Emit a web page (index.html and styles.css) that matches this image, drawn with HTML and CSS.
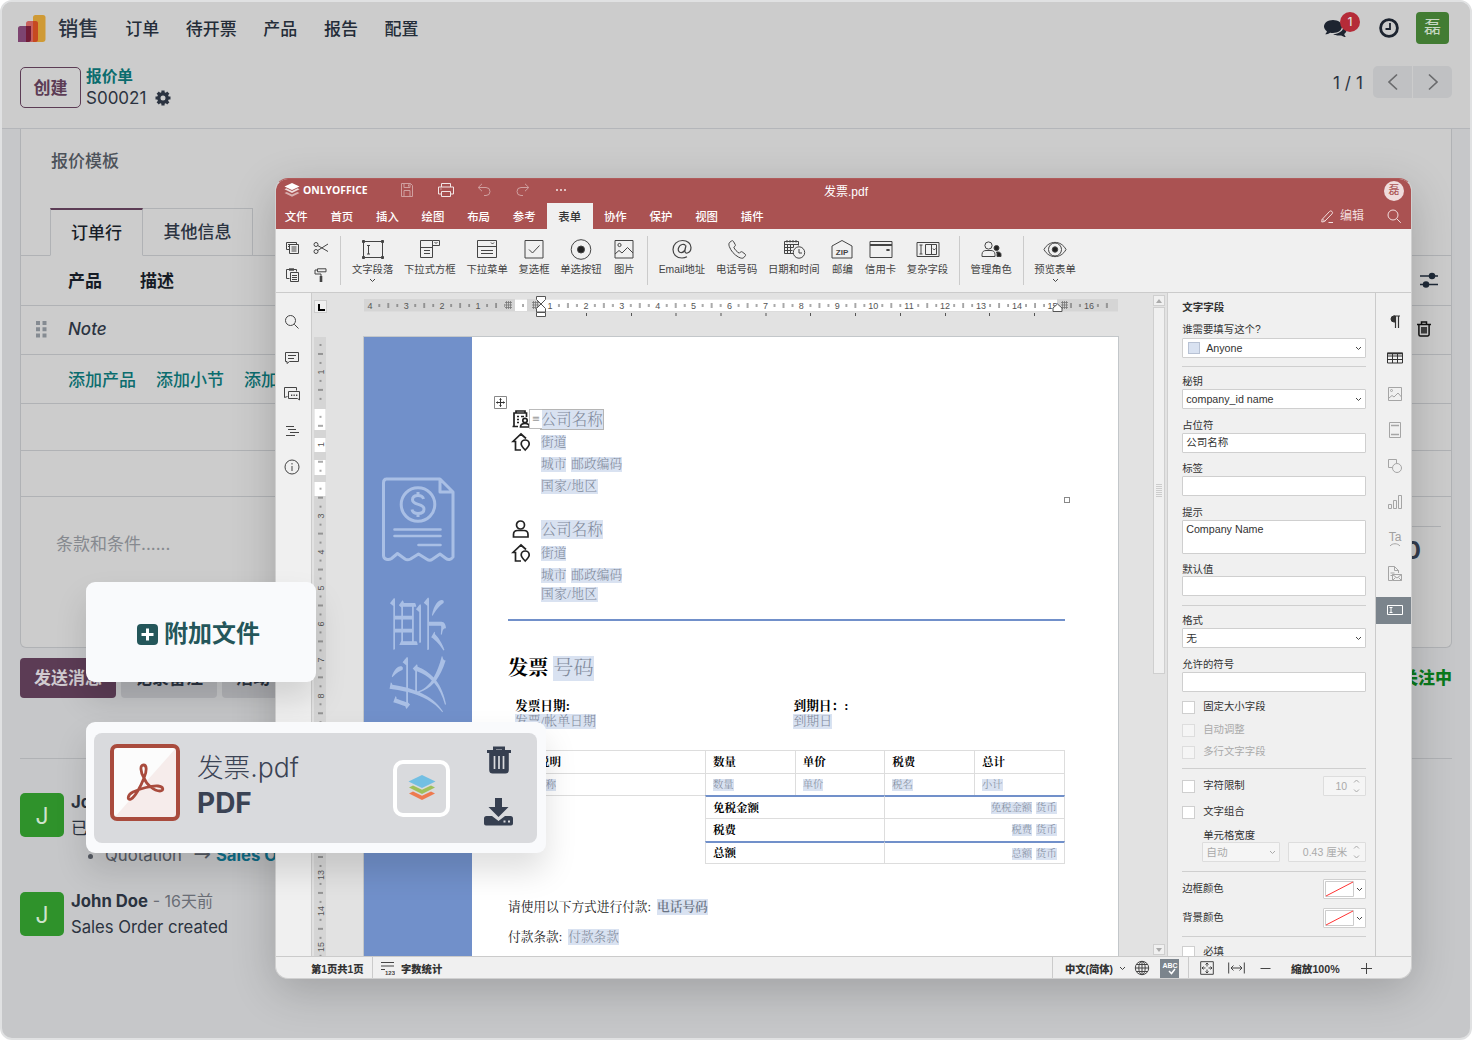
FILE: index.html
```html
<!DOCTYPE html>
<html lang="zh-CN">
<head>
<meta charset="utf-8">
<title>销售 - S00021</title>
<link rel="stylesheet" href="styles.css">
</head>
<body>
<div class="app">
  <header class="app-head">
    <nav class="nav">
      <svg class="nav-logo" width="28" height="28" viewBox="0 0 28 28"><path d="M15 2.5A2.500 2.500 0 0 1 17.500 0H25a2.500 2.500 0 0 1 2.500 2.500V24a3 3 0 0 1-3 3H15z" fill="#cf9a35"/><path d="M8 8.500A2.500 2.500 0 0 1 10.500 6H17.500A2.500 2.500 0 0 1 20 8.500V24a3 3 0 0 1-3 3H8z" fill="#c8605c"/><path d="M15 6h2.500A2.500 2.500 0 0 1 20 8.500V24a3 3 0 0 1-3 3h-2z" fill="#c74a20"/><path d="M0 13.500A2.500 2.500 0 0 1 2.500 11H13V24a3 3 0 0 1-3 3H0z" fill="#7d4470"/><path d="M8 11h5v13a3 3 0 0 1-3 3H8z" fill="#731c37"/></svg>
      <span class="nav-title">销售</span>
      <span class="nav-item">订单</span><span class="nav-item">待开票</span><span class="nav-item">产品</span><span class="nav-item">报告</span><span class="nav-item">配置</span>
      <div class="nav-right">
        <span class="chat"><svg width="24" height="19" viewBox="0 0 24 19"><path d="M9 1c5 0 9 2.800 9 6.500S14 14 9 14c-1 0-2-.1-2.900-.3C4.600 14.700 3 15.300 1.200 15.300c1-1 1.600-2 1.700-3.100C1.100 11 0 9.400 0 7.500 0 3.800 4 1 9 1z" fill="#1d2430"/><path d="M19.500 6.500c2 1.200 3 2.700 3 4.500 0 1.600-.9 3-2.300 4 .2 1.100.8 2 1.600 2.900-1.800 0-3.300-.6-4.600-1.500-3 .5-6.200 0-8-1.300 5.500 0 10.600-3.100 10.300-8.600z" fill="#1d2430"/></svg><b class="badge">1</b></span>
        <svg width="20" height="20" viewBox="0 0 20 20" fill="none" stroke="#1d2430"><circle cx="10" cy="10" r="8.400" stroke-width="2.800"/><path d="M11 5v6H6.500" stroke-width="1.800"/></svg>
        <span class="me">磊</span>
      </div>
    </nav>
    <div class="control">
      <button class="create">创建</button>
      <div class="crumbs"><b>报价单</b><span>S00021 <svg width="16" height="16" viewBox="0 0 16 16"><circle cx="8" cy="8" r="4.200" fill="none" stroke="#2b3340" stroke-width="3.400"/><path d="M8 .5v3M8 12.500v3M.5 8h3M12.500 8h3M2.700 2.700l2 2M11.300 11.300l2 2M2.700 13.300l2-2M11.300 4.700l2-2" stroke="#2b3340" stroke-width="3.200"/></svg></span></div>
      <div class="pager"><span>1 / 1</span><i><svg width="12" height="18" viewBox="0 0 12 18"><path d="M10 1.500L2 9l8 7.500"/></svg></i><i><svg width="12" height="18" viewBox="0 0 12 18"><path d="M2 1.500L10 9l-8 7.500"/></svg></i></div>
    </div>
  </header>
  <main class="sheet">
    <div class="tmpl">报价模板</div>
    <div class="tabs"><span class="tab on">订单行</span><span class="tab">其他信息</span></div>
    <div class="line thead"><span>产品</span><span>描述</span>
      <svg class="line-end" width="18" height="16" viewBox="0 0 18 16" stroke="#1f2a38" stroke-width="1.700"><path d="M0 4h18M0 12.500h18"/><circle cx="12" cy="4" r="2.400" fill="#1f2a38"/><circle cx="6" cy="12.500" r="2.400" fill="#1f2a38"/></svg></div>
    <div class="line note"><svg width="11" height="17" viewBox="0 0 11 17" fill="#858b92"><path d="M0 0h4v4H0zM6.500 0h4v4h-4zM0 6.300h4v4H0zM6.500 6.300h4v4h-4zM0 12.600h4v4H0zM6.500 12.600h4v4h-4z"/></svg><em>Note</em>
      <svg class="line-end bin" width="14" height="16" viewBox="0 0 14 16" fill="none" stroke="#111" stroke-width="1.500"><path d="M0 3.500h14M4.500 3V1h5v2M1.900 3.500V13.500a1.500 1.500 0 0 0 1.500 1.500h7.200a1.500 1.500 0 0 0 1.500-1.500V3.500M5 6v6.500M7 6v6.500M9 6v6.500"/></svg></div>
    <div class="line add"><span>添加产品</span><span>添加小节</span><span>添加备注</span></div>
    <div class="line blank"></div>
    <div class="line blank last"></div>
    <div class="terms"><span>条款和条件......</span><b>0</b></div>
  </main>
  <section class="chatter">
    <div class="actions"><span class="send">发送消息</span><span>记录备注</span><span>活动</span><b>关注中</b></div>
    <div class="rule"></div>
    <article class="msg"><span class="avatar">J</span><div><p><b>John Doe</b> <small>- 16天前</small></p><p class="dark">已创建销售订单</p><ul><li>Quotation <i>→</i> <b>Sales Order</b></li></ul></div></article>
    <article class="msg"><span class="avatar">J</span><div><p><b>John Doe</b> <small>- 16天前</small></p><p>Sales Order created</p></div></article>
  </section>
</div>

<div class="win">
  <div class="win-top">
    <div class="brand"><svg width="16" height="15" viewBox="0 0 16 15"><path d="M8 0l7.500 3.500L8 7 .5 3.500z" fill="#fff"/><path d="M.5 6.300l2-1L8 8l5.500-2.700 2 1L8 10z" fill="#fff" opacity=".8"/><path d="M.5 10l2.200-1.100L8 11.500l5.300-2.600 2.200 1.100L8 13.800z" fill="#fff" opacity=".55"/></svg>ONLYOFFICE</div>
    <div class="quick">
      <svg class="dim" width="16" height="14" viewBox="0 0 16 14"><path d="M2.500.5h9l2 2v11h-11zM5 .5v4h6v-4M5 13.500v-6h6v6M9.500 1.500v2"/></svg>
      <svg width="16" height="14" viewBox="0 0 16 14"><path d="M3.500 4V.5h9V4M3.500 11h-3V4h15v7h-3M3.500 8.500h9v5h-9zM2.500 6h1"/></svg>
      <svg class="dim" width="16" height="14" viewBox="0 0 16 14"><path d="M6 .8L2.200 4.500 6 8.200M2.500 4.500h7.500a4 4 0 0 1 0 8H8"/></svg>
      <svg class="dim" width="16" height="14" viewBox="0 0 16 14"><path d="M10 .8l3.800 3.700L10 8.200M13.500 4.500H6a4 4 0 0 0 0 8h2"/></svg>
      <svg width="16" height="14" viewBox="0 0 16 14"><path d="M3 7h2M7 7h2M11 7h2" stroke-width="1.600"/></svg>
    </div>
    <span class="doc-name">发票.pdf</span>
    <span class="user">磊</span>
  </div>
  <div class="win-tabs">
    <span>文件</span><span>首页</span><span>插入</span><span>绘图</span><span>布局</span><span>参考</span><span class="cur">表单</span><span>协作</span><span>保护</span><span>视图</span><span>插件</span>
    <div class="mode"><svg width="13" height="13" viewBox="0 0 13 13"><path d="M1 9.500L8.500 1.500a1.700 1.700 0 0 1 2.500 2.400L3.500 11.500.8 12zM7.500 12.500h4.500M1.500 9l2.300 2.300"/></svg>编辑<svg class="find" width="15" height="15" viewBox="0 0 15 15"><circle cx="6" cy="6" r="5"/><path d="M9.800 9.800l4 4"/></svg></div>
  </div>
  <div class="tools">
    <div class="clip">
      <svg width="16" height="14" viewBox="0 0 16 14"><path d="M4 8.500H1.500v-7h10v2M3 3.500h5M3 5.500h1M4.500 3.500h9v9h-9zM6.500 6h5M6.500 8h5M6.500 10h5"/></svg>
      <svg width="16" height="14" viewBox="0 0 16 14"><circle cx="3" cy="3.500" r="2"/><circle cx="3" cy="10.500" r="2"/><path d="M4.700 4.500L15 10.500M4.700 9.500L15 3"/></svg>
      <svg width="16" height="14" viewBox="0 0 16 14"><path d="M4.500 10.500H1.500v-9h10v2M5.500 4.500h8v9h-8zM7 7.500h5M7 9.500h5M7 11.500h5"/><path d="M4 1.500h5" stroke-width="2.400"/></svg>
      <svg width="16" height="14" viewBox="0 0 16 14"><path d="M4.500.8h8.500v3H4.500zM4.500 2h-2.500v4h6v2"/><path d="M8 8v6" stroke-width="2.600"/></svg>
    </div>
    <i class="sep"></i>
    <div class="tool"><svg width="24" height="22" viewBox="0 0 24 22"><path d="M2.500 2.500h19v16h-19zM6 6.500h3M6 15h3M7.500 6.500V15"/><path d="M1.500 1.500h2v2h-2zM20.500 1.500h2v2h-2zM1.500 17.500h2v2h-2zM20.500 17.500h2v2h-2z" fill="#444"/></svg>文字段落<svg class="more" width="7" height="5" viewBox="0 0 7 5"><path d="M1 1l2.500 2.500L6 1"/></svg></div>
    <div class="tool"><svg width="24" height="22" viewBox="0 0 24 22"><path d="M2.500 1.500h12v17h-12zM2.500 8.500h12M14.500 1.500h7v5h-7M16.500 3l1.500 1.500L19.500 3M6 11.500h6M6 14.500h6"/></svg>下拉式方框</div>
    <div class="tool"><svg width="24" height="22" viewBox="0 0 24 22"><path d="M2.500 1.500h19v17h-19zM2.500 7.500h19M16 3.500l1.500 1.500L19 3.500M6 11.500h12M6 14.500h12"/></svg>下拉菜单</div>
    <div class="tool"><svg width="24" height="22" viewBox="0 0 24 22"><path d="M3 1.500h18v17.500H3zM7 10.500l3.500 3.500L17.500 6.500"/></svg>复选框</div>
    <div class="tool"><svg width="24" height="22" viewBox="0 0 24 22"><circle cx="12" cy="10.500" r="9.800"/><circle cx="12" cy="10.500" r="3.500" fill="#222"/></svg>单选按钮</div>
    <div class="tool"><svg width="24" height="22" viewBox="0 0 24 22"><path d="M3 1.500h18v17.500H3zM3 15l4-3.500 3 2.500 5.500-5.500L21 14"/><circle cx="7.500" cy="6" r="1.600"/></svg>图片</div>
    <i class="sep"></i>
    <div class="tool"><svg width="24" height="22" viewBox="0 0 24 22"><path d="M15.500 6.500c-1-1.500-5.500-2-7 2.500-1.500 5 4.500 6.500 6.500 1.500l1-4-1 5c-.3 2 .8 3 2.300 2.500 2-.6 3.700-3 3.700-5.500 0-4-3.500-7-8.500-7-5.500 0-9.500 4-9.500 9s3.500 8.500 9 8.500c2 0 3.500-.4 5-1.200" stroke-width="1.200"/></svg>Email地址</div>
    <div class="tool"><svg width="24" height="22" viewBox="0 0 24 22"><path d="M4.500 3.500l2-1.500c1-.6 1.600-.2 2 .5l1.700 3c.4.800.2 1.400-.4 1.900l-1 .8c1 2.500 3 4.500 5.500 6l1-1c.6-.6 1.300-.7 2-.2l2.700 2c.7.600.8 1.200.3 1.800l-1.500 1.800c-1 1-2.800.8-5.300-.5C9 15.500 6 12 4.300 7.500c-.6-1.800-.5-3.200.2-4z"/></svg>电话号码</div>
    <div class="tool"><svg width="24" height="22" viewBox="0 0 24 22"><path d="M11 14.500H2.500v-12h14v4M2.500 5.500h14M5 1v2.500M8 1v2.500M11 1v2.500M14 1v2.500M2.500 8.500h9M2.500 11.500h8M5.500 5.500v9M8.500 5.500v9M11.500 5.500v3"/><circle cx="17" cy="13.500" r="5.700" fill="#f0f0f0"/><path d="M17 10v4h3"/></svg>日期和时间</div>
    <div class="tool"><svg width="24" height="22" viewBox="0 0 24 22"><path d="M2 19V7l10-5.500L22 7v12z"/><text x="12" y="15.500" class="zip">ZIP</text></svg>邮编</div>
    <div class="tool"><svg width="24" height="22" viewBox="0 0 24 22"><path d="M1 2.500h22v16H1zM1 6.500h22M17.500 11h3" /><path d="M1 6h22M17.500 11h3" stroke-width="1.800"/></svg>信用卡</div>
    <div class="tool"><svg width="24" height="22" viewBox="0 0 24 22"><path d="M1 3.500h22v14H1zM3.500 6h3M3.500 15h3M5 6v9M9.500 5.500h11v10h-11zM15.500 5.500v10M17 9.500l1.200 1.500 1.300-1.500"/></svg>复杂字段</div>
    <i class="sep"></i>
    <div class="tool"><svg width="24" height="22" viewBox="0 0 24 22"><circle cx="9.500" cy="6.500" r="3.600"/><path d="M3 17.500v-2c0-3 2-4 4-4h5c2 0 4 1 4 4v2z"/><circle cx="17.500" cy="9" r="2.500" fill="#222"/><path d="M18 17.500v-3l-.5-1.500h1.500c2 0 3 1 3 2.500v2z" fill="#222"/></svg>管理角色</div>
    <i class="sep"></i>
    <div class="tool"><svg width="24" height="22" viewBox="0 0 24 22"><path d="M1 10.500C6 1 18 1 23 10.500 18 20 6 20 1 10.500z"/><circle cx="12" cy="10.500" r="6.500"/><circle cx="12" cy="10.500" r="2.700" fill="#222"/></svg>预览表单<svg class="more" width="7" height="5" viewBox="0 0 7 5"><path d="M1 1l2.500 2.500L6 1"/></svg></div>
  </div>

  <div class="body">
    <div class="left-bar">
      <svg width="16" height="16" viewBox="0 0 16 16"><circle cx="6.500" cy="6.500" r="5"/><path d="M10.300 10.300l4.200 4.200"/></svg>
      <svg width="16" height="16" viewBox="0 0 16 16"><path d="M1.500 2.500h13v9h-9l-2.500 2v-2h-1.500zM4 5.500h8M4 8.500h6"/></svg>
      <svg width="16" height="16" viewBox="0 0 16 16"><path d="M3.500 10.500l-3 1v-10h12v3M4.500 5.500h11v8.500l-2-1.500h-9z"/><path d="M7 9.300h1.300M9.500 9.300h1.300M12 9.300h1.300" stroke-width="1.500"/></svg>
      <svg width="16" height="16" viewBox="0 0 16 16"><path d="M2 3.500h8M4 6.500h8M6 9.500h9M2 12.500h9"/></svg>
      <svg width="16" height="16" viewBox="0 0 16 16"><circle cx="8" cy="8" r="7"/><path d="M8 7v5M8 4v1.500"/></svg>
    </div>
    <div class="vruler">
      <i class="corner"></i>
      <svg class="ruler" width="14" height="620" viewBox="313 337 14 620">
        <defs><pattern id="vt" patternUnits="userSpaceOnUse" x="313" y="336" width="14" height="35.930"><path d="M6.500 9h2M5 18h5M6.500 27h2" stroke="#555" stroke-width="1"/></pattern></defs>
        <path d="M314 337h12v620h-12z" fill="#d5d5d5"/>
        <path d="M314.500 409h11v21h-11zM314.500 438h11v14h-11zM314.500 460h11v15h-11zM314.500 482h11v14h-11z" fill="#fff"/>
        <path d="M313 337h14v93h-14zM313 460h14v15h-14zM313 485h14v472h-14z" fill="url(#vt)"/>
        <g class="num"><text transform="translate(323.500 372) rotate(-90)">1</text><text transform="translate(323.500 444.500) rotate(-90)">1</text><text transform="translate(323.500 516) rotate(-90)">3</text><text transform="translate(323.500 552) rotate(-90)">4</text><text transform="translate(323.500 588) rotate(-90)">5</text><text transform="translate(323.500 624) rotate(-90)">6</text><text transform="translate(323.500 660) rotate(-90)">7</text><text transform="translate(323.500 696) rotate(-90)">8</text><text transform="translate(323.500 875) rotate(-90)">13</text><text transform="translate(323.500 911) rotate(-90)">14</text><text transform="translate(323.500 947) rotate(-90)">15</text></g>
      </svg>
    </div>
    <div class="canvas">
      <svg class="ruler" width="756" height="24" viewBox="363 295 756 24">
        <defs><pattern id="ht" patternUnits="userSpaceOnUse" x="514" y="298" width="35.930" height="14"><path d="M9 6v3M18 5v5M27 6v3" stroke="#555" stroke-width="1"/></pattern></defs>
        <path d="M364 299h754v12.500H364z" fill="#d5d5d5"/><path d="M515 299.500h12v11.500h-12zM540 299.500h517v11.500H540z" fill="#fff"/>
        <path d="M366 298h139v14H366zM517 298h10v14h-10zM543 298h506v14H543zM1066 298h46v14h-46z" fill="url(#ht)"/>
        <path d="M505 302.500h7M505 305h7M505 307.500h7M506.500 301v8M508.500 301v8M510.500 301v8M532 302.500h7M532 305h7M532 307.500h7M533.500 301v8M535.500 301v8M537.500 301v8M1061 302.500h7M1061 305h7M1061 307.500h7M1062.500 301v8M1064.500 301v8M1066.500 301v8" stroke="#777" stroke-width=".8"/>
        <g class="num"><text x="370" y="308.500">4</text><text x="406.200" y="308.500">3</text><text x="442" y="308.500">2</text><text x="478" y="308.500">1</text><text x="550" y="308.500">1</text><text x="586" y="308.500">2</text><text x="621.800" y="308.500">3</text><text x="657.700" y="308.500">4</text><text x="693.600" y="308.500">5</text><text x="729.500" y="308.500">6</text><text x="765.400" y="308.500">7</text><text x="801.300" y="308.500">8</text><text x="837.200" y="308.500">9</text><text x="873.200" y="308.500">10</text><text x="909" y="308.500">11</text><text x="945" y="308.500">12</text><text x="981" y="308.500">13</text><text x="1017" y="308.500">14</text><text x="1052.500" y="308.500">15</text><text x="1089" y="308.500">16</text></g>
        <path d="M536.500 296.500h9v3l-4.500 4.500-4.500-4.500zM536.500 312v-3.500l4.500-4.500 4.500 4.500v3.500zM536.500 312.500h9v4h-9zM1053 311.500v-3.500l4.500-4 4.500 4v3.500z" fill="#fff" stroke="#555"/>
        <path d="M586.500 313v3M631.500 313v3M676 313v3M721 313v3M766 313v3M810.500 313v3M855.500 313v3M900.500 313v3M945.500 313v3M989.500 313v3M1034.500 313v3" stroke="#555"/>
      </svg>
      <div class="page">
        <div class="band">
          <svg class="receipt" width="108" height="400" viewBox="364 457 108 400"><path d="M386 479h54l13 13v65c-2 3-5 3-7 1.500l-6-4.500-8 5.500c-2 1.500-4 .5-5.500-.5l-8-5-8 5c-2 1-3.500 1.500-5.500 0l-7.500-5.500-6 5c-3 2-8 1-8-3V483c0-2.500 1-4 3-4zM440 479v13h13" stroke-linejoin="round"/><circle cx="418" cy="504.500" r="16.800"/><path d="M394.500 529.500h46M394.500 536h46M418.500 545h22" stroke-linecap="round" stroke-width="2.600"/><path d="M423.500 499c-.5-2.300-2.500-3.500-5.500-3.500-3.500 0-5.500 1.700-5.500 4.300 0 6 11.500 3.200 11.500 9.200 0 2.800-2.300 4.500-6 4.500-3.500 0-5.500-1.500-6-4M418 492v4M418 513v4"/><text class="band-text" transform="translate(441 714) rotate(-90)">发票</text></svg>
        </div>
        <div class="sheet-text">
          <svg class="move" width="13" height="13" viewBox="0 0 13 13"><path d="M.5.5h12v12H.5z" fill="#fff" stroke="#888"/><path d="M6.500 2.500v8M2.500 6.500h8M5.500 3.500l1-1 1 1M5.500 9.500l1 1 1-1M3.500 5.500l-1 1 1 1M9.500 5.500l1 1-1 1" fill="none" stroke="#333"/></svg>
          <div class="row h24 name"><svg width="20" height="20" viewBox="0 0 20 20"><path d="M7 17.500H3V4h2V2h9v2h1.500v4M1.500 17.500H7M5 4h9M6 7.500h2M10 7.500h3M6 10.500h2M6 13.500h2"/><circle cx="14" cy="11.500" r="2.200"/><path d="M9.500 18c0-2.500 1.500-3.500 4.500-3.500s4.500 1 4.500 3.500z"/></svg><span class="grip">≡</span><mark class="boxed">公司名称</mark></div>
          <div class="row h22"><svg width="20" height="20" viewBox="0 0 20 20"><path d="M10 18H4.500V9.500h-2.500L10 2l5 4.500M14.200 18c-2.500-2.500-4-4-4-6a4 4 0 0 1 8 0c0 2-1.500 3.500-4 6z"/></svg><mark>街道</mark></div>
          <div class="row h22"><s></s><mark>城市</mark><mark>邮政编码</mark></div>
          <div class="row h23 after"><s></s><mark class="slash">国家/地区</mark></div>
          <div class="row h24 name"><svg width="20" height="20" viewBox="0 0 20 20"><circle cx="9.500" cy="6" r="4"/><path d="M2.500 18v-2.500c0-3 2-4 4-4h6.500c2 0 4 1 4 4V18z"/></svg><mark>公司名称</mark></div>
          <div class="row h24"><svg width="20" height="20" viewBox="0 0 20 20"><path d="M10 18H4.500V9.500h-2.500L10 2l5 4.500M14.200 18c-2.500-2.500-4-4-4-6a4 4 0 0 1 8 0c0 2-1.500 3.500-4 6z"/></svg><mark>街道</mark></div>
          <div class="row h21"><s></s><mark>城市</mark><mark>邮政编码</mark></div>
          <div class="row h17"><s></s><mark class="slash">国家/地区</mark></div>
          <hr>
          <div class="inv"><b>发票</b><mark>号码</mark></div>
          <div class="dates"><div><b>发票日期:</b><mark>发票/帐单日期</mark></div><div><b>到期日：:</b><mark>到期日</mark></div></div>
          <div class="grid">
            <div class="c hd wide">产品说明</div><div class="c hd">数量</div><div class="c hd">单价</div><div class="c hd">税费</div><div class="c hd">总计</div>
            <div class="c wide"><mark>产品名称</mark></div><div class="c"><mark>数量</mark></div><div class="c"><mark>单价</mark></div><div class="c"><mark>税名</mark></div><div class="c"><mark>小计</mark></div>
            <div class="c hd two blue">免税金额</div><div class="c two blue end"><mark>免税金额</mark><mark>货币</mark></div>
            <div class="c hd two">税费</div><div class="c two end"><mark>税费</mark><mark>货币</mark></div>
            <div class="c hd two blue">总额</div><div class="c two blue end"><mark>总额</mark><mark>货币</mark></div>
          </div>
          <div class="pay">请使用以下方式进行付款:<mark class="strong">电话号码</mark></div>
          <div class="pay second">付款条款:<mark>付款条款</mark></div>
          <i class="handle"></i>
        </div>
      </div>
    </div>
    <div class="scroll"><i class="btn"><svg width="6" height="4" viewBox="0 0 6 4"><path d="M0 4l3-4 3 4z" fill="#aaa"/></svg></i><i class="thumb"><u></u></i><i class="btn end"><svg width="6" height="4" viewBox="0 0 6 4"><path d="M0 0l3 4 3-4z" fill="#aaa"/></svg></i></div>
    <div class="panel">
      <b class="lbl g7">文字字段</b>
      <span class="lbl g8">谁需要填写这个?</span>
      <div class="box sel g2"><i class="swatch"></i>Anyone<svg class="chev" width="7" height="5" viewBox="0 0 7 5"><path d="M1 1l2.500 2.500L6 1"/></svg></div>
      <i class="div g8"></i>
      <span class="lbl g7">秘钥</span>
      <div class="box sel g1">company_id name<svg class="chev" width="7" height="5" viewBox="0 0 7 5"><path d="M1 1l2.500 2.500L6 1"/></svg></div>
      <span class="lbl g9">占位符</span>
      <div class="box g1">公司名称</div>
      <span class="lbl g8">标签</span>
      <div class="box g1"></div>
      <span class="lbl g9">提示</span>
      <div class="box area g1">Company Name</div>
      <span class="lbl g8">默认值</span>
      <div class="box"></div>
      <i class="div g9"></i>
      <span class="lbl g7">格式</span>
      <div class="box sel g1">无<svg class="chev" width="7" height="5" viewBox="0 0 7 5"><path d="M1 1l2.500 2.500L6 1"/></svg></div>
      <span class="lbl g9">允许的符号</span>
      <div class="box g1"></div>
      <div class="check g8"><i></i>固定大小字段</div>
      <div class="check off g9"><i></i>自动调整</div>
      <div class="check off g8"><i></i>多行文字字段</div>
      <i class="div g9"></i>
      <div class="check tall g7"><i></i>字符限制<div class="box spin w43">10<svg width="7" height="14" viewBox="0 0 7 14"><path d="M1 3.500L3.500 1 6 3.500M1 10.500L3.500 13 6 10.500"/></svg></div></div>
      <div class="check g9"><i></i>文字组合</div>
      <span class="lbl indent g9">单元格宽度</span>
      <div class="pair"><div class="box off sel w77">自动<svg class="chev" width="7" height="5" viewBox="0 0 7 5"><path d="M1 1l2.500 2.500L6 1"/></svg></div><div class="box spin w78">0.43 厘米<svg width="7" height="14" viewBox="0 0 7 14"><path d="M1 3.500L3.500 1 6 3.500M1 10.500L3.500 13 6 10.500"/></svg></div></div>
      <i class="div g9"></i>
      <div class="color g7">边框颜色<div class="box pick"><svg width="41" height="18" viewBox="0 0 41 18"><path d="M1.500 1.500h28v15h-28z" stroke="#ccc"/><path d="M2 16L29 2" stroke="#f33"/><path d="M33 8l2.500 2.500L38 8" stroke="#444"/></svg></div></div>
      <div class="color g9">背景颜色<div class="box pick"><svg width="41" height="18" viewBox="0 0 41 18"><path d="M1.500 1.500h28v15h-28z" stroke="#ccc"/><path d="M2 16L29 2" stroke="#f33"/><path d="M33 8l2.500 2.500L38 8" stroke="#444"/></svg></div></div>
      <i class="div g8"></i>
      <div class="check g8"><i></i>必填</div>
    </div>
    <div class="right-bar">
      <span class="act"><svg width="16" height="16" viewBox="0 0 16 16"><path d="M8.500 2v12M11.500 2v12M6.500 2H13" stroke="#333" stroke-width="1.200"/><path d="M8 2H7a3 3 0 0 0 0 6h1z" fill="#333" stroke="#333"/></svg></span>
      <span class="act"><svg width="16" height="16" viewBox="0 0 16 16"><path d="M.5 3h15v10H.5zM.5 6h15M.5 9.500h15M5.500 3v10M10.500 3v10" stroke="#333"/><path d="M0 3.500h16" stroke="#333" stroke-width="1.600"/></svg></span>
      <span><svg width="16" height="16" viewBox="0 0 16 16"><path d="M1.500 1.500h13v13h-13zM2 12l3-2.500 2 1.500 4-4 3.500 4"/><circle cx="4.500" cy="4.500" r="1"/></svg></span>
      <span><svg width="16" height="16" viewBox="0 0 16 16"><path d="M2.500.5h11v15h-11z"/><path d="M4 3.500h8M4 12.500h8" stroke-width="1.500"/></svg></span>
      <span><svg width="16" height="16" viewBox="0 0 16 16"><path d="M5 9.500H1.500v-8h8V5"/><circle cx="10" cy="10" r="4.500"/></svg></span>
      <span><svg width="16" height="16" viewBox="0 0 16 16"><path d="M1.500 10.500h3v4h-3zM6.500 6.500h3v8h-3zM11.500 1.500h3v13h-3z"/></svg></span>
      <span><svg width="16" height="18" viewBox="0 0 16 18"><text x="8" y="12" class="ta">Ta</text><path d="M3 17c2.500-3 7.500-3 10 0"/></svg></span>
      <span><svg width="16" height="16" viewBox="0 0 16 16"><path d="M5 14.500H1.500V.5h6l4 4v2.500M7.500.5v4h4M3.500 7h4M3.500 9.500h2M5.500 8.500h9v6h-9zM5.500 8.500l4.500 3.500 4.500-3.500M5.500 14.500l3-3M14.500 14.500l-3-3"/></svg></span>
      <span class="sel-act"><svg width="18" height="12" viewBox="0 0 18 12"><path d="M1.500 1.500h15v9h-15zM3.500 3.500h3M3.500 8.500h3M5 3.500v5" stroke="#fff"/></svg></span>
    </div>
  </div>
  <div class="status">
    <b class="pg">第1页共1页</b><i class="vsep"></i>
    <svg class="wc" width="14" height="14" viewBox="0 0 14 14"><path d="M0 1.500h13M0 5h13M0 8.500h4"/><text x="9" y="13.500" class="tiny">123</text></svg><b>字数统计</b>
    <div class="st-right"><b class="lang">中文(简体)</b><svg width="7" height="5" viewBox="0 0 7 5"><path d="M1 1l2.500 2.500L6 1"/></svg>
      <svg class="globe" width="16" height="16" viewBox="0 0 16 16"><circle cx="8" cy="8" r="6.700"/><ellipse cx="8" cy="8" rx="3.200" ry="6.700"/><path d="M8 1.300v13.400M1.300 8h13.400M2.500 4.500h11M2.500 11.500h11"/></svg>
      <span class="abc"><svg width="20" height="18" viewBox="0 0 20 18"><text x="10" y="9" class="abct">ABC</text><path d="M9 12l2.500 2.500L15 10" stroke="#fff" stroke-width="1.500"/></svg></span><i class="vsep"></i>
      <svg class="fit" width="14" height="14" viewBox="0 0 14 14"><path d="M.7.7h12.600v12.600H.7zM7 2v3.500M5.500 3.500L7 2l1.500 1.500M7 12V8.500M5.500 10.500L7 12l1.500-1.500M2 7h3.500M3.500 5.500L2 7l1.500 1.500M12 7H8.500M10.500 5.500L12 7l-1.500 1.500"/></svg>
      <svg class="fitw" width="17" height="12" viewBox="0 0 17 12"><path d="M.7.5v11M16.300.5v11M3 6h11M5.500 3.500L3 6l2.500 2.500M11.500 3.500L14 6l-2.500 2.500"/></svg>
      <svg class="minus" width="11" height="11" viewBox="0 0 11 11"><path d="M.5 5.500h10"/></svg><b class="zoom">縮放100%</b><svg width="11" height="11" viewBox="0 0 11 11"><path d="M0 5.500h11M5.500 0v11"/></svg>
    </div>
  </div>
</div>

<div class="card attach"><svg width="21" height="21" viewBox="0 0 21 21"><rect width="21" height="21" rx="4" fill="#24565a"/><path d="M10.500 4.500v12M4.500 10.500h12" stroke="#fff" stroke-width="3"/></svg>附加文件</div>
<div class="card file"><div class="file-in">
  <svg class="pdf" width="70" height="77" viewBox="0 0 70 77"><rect x="2" y="2" width="66" height="73" rx="5" fill="#fcfcfc"/><path d="M66 4v70H4z" fill="#f6eceb"/><rect x="2" y="2" width="66" height="73" rx="5" fill="none" stroke="#a94b3d" stroke-width="4"/><path transform="translate(17 19)" d="M17 15C13 8 13 2 16.500 2 20 2 20 8 17 15 14 23 8 34 4 36 0 38 0 32 6 29 13 25.500 25 22.500 31 23 37 23.500 37 28 33 28 27 28 19 21 17 15z" fill="none" stroke="#a94b3d" stroke-width="2.800"/></svg>
  <div class="fname"><span>发票.pdf</span><b>PDF</b></div>
  <span class="open"><svg width="28" height="26" viewBox="0 0 28 26"><path d="M1 18.500l4-2 9 4.200 9-4.200 4 2L14 25z" fill="#ee7a4f"/><path d="M1 12.500l4-2 9 4.200 9-4.200 4 2L14 19z" fill="#9fc05a"/><path d="M14 0l13.500 6.500L14 13 .5 6.500z" fill="#72bfe3"/></svg></span>
  <div class="ops"><svg width="26" height="28" viewBox="0 0 26 28"><path d="M1 5.500h24M8.500 5V2h9v3" fill="none" stroke="#363f50" stroke-width="3"/><path d="M3.200 7h19.600v17a3.500 3.500 0 0 1-3.500 3.500H6.700A3.500 3.500 0 0 1 3.200 24z" fill="#363f50"/><path d="M8.500 10v13M13 10v13M17.500 10v13" stroke="#d9dadd" stroke-width="1.700"/></svg>
  <svg width="29" height="28" viewBox="0 0 29 28"><path d="M11 0h7v9h6.500l-10 10-10-10H11z" fill="#363f50"/><path d="M0 20.500A2.500 2.500 0 0 1 2.500 18H8l6.500 5 6.500-5h5.500a2.500 2.500 0 0 1 2.500 2.500v5a2 2 0 0 1-2 2H2a2 2 0 0 1-2-2z" fill="#363f50"/><path d="M19.500 23.500h2M24 23.500h2" stroke="#d9dadd" stroke-width="2"/></svg></div>
</div></div>
</body>
</html>
```

FILE: styles.css
```css
* { box-sizing: border-box; }
body { margin: 0; width: 1472px; height: 1040px; position: relative; overflow: hidden; background: #fff; font-family: Inter, "Noto Sans CJK SC", sans-serif; color: #2b3340; }
p, ul { margin: 0; padding: 0; }
i { font-style: normal; }
svg { flex: none; display: block; }

/* sales application */
.app { width: 1472px; height: 1040px; border: 2px solid #e0e1e2; border-radius: 12px; background: #c6c7c9; overflow: hidden; font-size: 17px; }
.app-head { height: 127px; background: #ccc; border-bottom: 1.500px solid #b4b6ba; padding: 0 18px 0 16px; }
.nav { display: flex; align-items: center; height: 52px; padding-bottom: 2px; }
.nav-logo { margin-top: 3px; }
.nav-title { font-size: 20.300px; margin-left: 12px; font-weight: 500; }
.nav-item { margin-left: 26.600px; font-weight: 500; color: #242c38; }
.nav-right { margin: 2px 3px 0 auto; display: flex; align-items: center; }
.chat { position: relative; margin-right: 31px; }
.badge { position: absolute; left: 16px; top: -7px; width: 20px; height: 20px; border-radius: 50%; background: #b52b38; color: #ddd; font: 500 12px/20px Inter, sans-serif; text-align: center; }
.me { width: 33px; height: 32px; border-radius: 4px; background: #427c33; color: #c9d8c5; text-align: center; line-height: 31px; margin-left: 17px; }
.control { display: flex; height: 66px; padding: 13px 0 0 2px; }
.create { width: 61px; height: 41px; border: 1.500px solid #5c3c55; border-radius: 5px; background: none; color: #5c3c55; font: 700 17px "Noto Sans CJK SC", sans-serif; padding: 0 0 2px; }
.crumbs { margin-left: 5px; display: flex; flex-direction: column; font-size: 17px; line-height: 22px; }
.crumbs b { color: #0b6c6e; font-size: 15.700px; line-height: 20px; }
.crumbs span { display: flex; align-items: center; gap: 9px; }
.pager { margin-left: auto; display: flex; height: 32px; margin-top: -1px; line-height: 34px; }
.pager span { margin-right: 10px; letter-spacing: .1px; }
.pager i { width: 39px; background: #c0c1c3; border-radius: 5px 0 0 5px; display: flex; align-items: center; justify-content: center; margin-right: 1px; }
.pager i + i { border-radius: 0 5px 5px 0; margin-right: 0; }
.pager path { fill: none; stroke: #6a6b6d; stroke-width: 1.700; }
.sheet { margin: 0 18px; height: 519px; background: #ccc; border: 1px solid #b0b2b5; border-top: 0; border-radius: 0 0 6px 6px; }
.tmpl { height: 79px; padding: 20px 0 0 30px; line-height: 25px; color: #4d525a; font-weight: 500; }
.tabs { display: flex; height: 48px; border-bottom: 1px solid #b0b2b5; padding-left: 29px; font-weight: 500; }
.tab { height: 48px; width: 110px; border: 1px solid #b0b2b5; border-left: 0; text-align: center; line-height: 47px; }
.tab.on { width: 93px; border: 1px solid #b0b2b5; border-top: 2px solid #5c3c55; border-bottom-color: #ccc; color: #161c26; }
.line { display: flex; align-items: center; height: 49px; border-bottom: 1px solid #b0b2b5; padding: 0 0 2px 47px; }
.line-end { margin-left: auto; margin-right: 13px; }
.thead { height: 50px; font-weight: 700; color: #161c26; gap: 38px; }
.note { padding-left: 15px; gap: 21px; font-weight: 500; }
.bin { margin-right: 20px; }
.add { gap: 20px; color: #0b6c6e; font-weight: 500; }
.blank { height: 47px; }
.blank.last { height: 46px; }
.terms { padding: 29px 10px 0 35px; display: flex; justify-content: space-between; color: #86898f; line-height: 27px; }
.terms span { margin-top: 5px; }
.terms b { color: #333c4d; font-size: 24px; line-height: 40px; width: 300px; text-align: right; border-top: 1px solid #b0b2b5; padding: 4px 20px 0 0; }
.chatter { padding: 10px 18px; font-size: 16.700px; }
.actions { display: flex; height: 40px; line-height: 40px; font-size: 17px; font-weight: 700; }
.actions span { padding: 0 14px; border-radius: 4px; background: #b3b4b8; margin-right: 5px; }
.actions .send { background: #5c3c55; color: #d0cbd0; }
.actions b { margin-left: auto; color: #0a7a1c; }
.rule { height: 1px; background: #b0b2b5; margin: 60px 0 34px; }
.msg { display: flex; height: 99px; line-height: 26px; }
.avatar { width: 44px; height: 44px; border-radius: 5px; background: #2f922b; color: #cde3cc; text-align: center; line-height: 46px; font-size: 23px; margin-right: 7px; }
.msg p { margin-top: -4px; margin-bottom: 4px; white-space: nowrap; }
.msg small { font-size: 16px; color: #6a6e76; }
.msg ul { padding-left: 34px; margin-top: -3px; }
.msg li { white-space: nowrap; color: #555a63; }
.msg li i { font: 21px/20px "DejaVu Sans", sans-serif; margin: 0 0 0 7px; }
.msg li b { color: #0f6f8a; }

/* editor window */
.win { position: absolute; left: 275px; top: 178px; width: 1137px; height: 801px; border-radius: 13px; background: #f0f0f0; overflow: hidden; border: 1px solid #d0d0d0; border-top-color: #b05c5c; font: 11px/14px "Liberation Sans", "Noto Sans CJK SC", sans-serif; color: #444; display: flex; flex-direction: column; }
body::before { content: ""; position: absolute; left: 275px; top: 178px; width: 1137px; height: 800px; border-radius: 13px; box-shadow: 0 12px 45px rgba(0,0,0,.2); }
.win svg { fill: none; stroke: #444; stroke-width: 1; }
.win svg text { stroke: none; fill: #444; text-anchor: middle; font-family: "Liberation Sans", sans-serif; }
.win-top { height: 24px; flex: none; background: #aa5252; display: flex; align-items: center; color: #fff; }
.brand { display: flex; align-items: center; gap: 3px; padding: 0 0 2px 8px; width: 123px; font: 700 10.400px "Open Sans", sans-serif; }
.win .brand svg { stroke: none; }
.quick { display: flex; gap: 22.500px; padding-bottom: 2px; }
.win .quick svg { stroke: #fff; opacity: .85; }
.win .quick .dim { opacity: .45; }
.doc-name { margin-left: 255px; font-size: 12px; padding-top: 2px; }
.user { margin-left: auto; margin-right: 7px; width: 20px; height: 20px; border-radius: 50%; background: #efdcdc; color: #aa5252; text-align: center; line-height: 19px; font-size: 11px; }
.win-tabs { height: 26px; flex: none; background: #aa5252; display: flex; color: #fff; font-weight: 500; font-size: 11.400px; }
.win-tabs > span { width: 45.600px; text-align: center; line-height: 26px; flex: none; font-family: "Noto Sans CJK SC", sans-serif; }
.win-tabs > span:first-child { margin-left: -2.600px; }
.win-tabs .cur { background: #f0f0f0; color: #333; }
.mode { margin-left: auto; display: flex; align-items: center; gap: 6px; margin-right: 9px; font-weight: 400; font-size: 12px; color: #f2dede; }
.win .mode svg { stroke: #f2dede; }
.mode .find { margin-left: 17px; }
.tools { height: 64px; flex: none; border-bottom: 1px solid #cbcbcb; display: flex; gap: 10.700px; padding: 7px 0 0 9px; font-size: 10.350px; white-space: nowrap; }
.clip { display: grid; grid-template-columns: 16px 16px; gap: 12.500px 12px; padding-top: 5px; width: 44.500px; align-content: start; }
.sep { width: 1px; height: 49px; background: #cbcbcb; }
.tool { display: flex; flex-direction: column; align-items: center; line-height: 15px; padding-top: 3px; }
.tool svg { margin-bottom: 1px; }
.tool .more { margin-top: 1px; }
.win .tool .zip { font-size: 8px; font-weight: 700; }
.body { display: flex; height: 663px; flex: none; }
.left-bar { width: 36px; border-right: 1px solid #cbcbcb; display: flex; flex-direction: column; align-items: center; gap: 20.200px; padding: 21px 2px 0 0; }
.vruler { width: 16px; background: #e2e2e2; }
.corner { display: block; width: 13px; height: 13px; margin: 7px 0 24px 2px; border: 1px solid #ccc; background: #f0f0f0; position: relative; }
.corner::after { content: ""; position: absolute; left: 3px; top: 3px; width: 5px; height: 5px; border: solid #000; border-width: 0 0 2px 2px; }
.vruler svg { margin-left: 1px; }
.win .ruler { stroke: none; }
.win .num text { font-size: 9px; fill: #555; }
.canvas { width: 825px; background: #e2e2e2; padding: 2px 0 0 35px; }
.page { margin-top: 17px; width: 756px; height: 621px; border: 1px solid #c3c7ca; border-bottom: 0; background: #fff; display: flex; overflow: hidden; }
.band { width: 108px; flex: none; background: #7190ca; padding-top: 120px; }
.win .receipt { stroke: #a9bfe5; stroke-width: 3; }
.win .receipt .band-text { font: 400 60px "Noto Serif CJK SC", "Noto Sans CJK SC", serif; fill: #a9bfe5; text-anchor: start; }
.sheet-text { position: relative; padding: 70px 53px 0 36px; width: 646px; flex: none; color: #222; font: 12.700px/15px "Liberation Serif", "Noto Serif CJK SC", "Noto Sans CJK SC", serif; }
.sheet-text mark { background: #d9e2f1; color: #80899a; font-weight: 300; }
.sheet-text .slash { letter-spacing: .5px; }
.row { position: relative; display: flex; align-items: center; gap: 5px; }
.row > svg { margin: 0 5px 0 3px; width: 20px; }
.win .row > svg { stroke: #222; stroke-width: 1.700; }
.row s { width: 28px; }
.h24 { height: 24px; } .h23 { height: 23px; } .h22 { height: 22px; } .h21 { height: 21px; } .h17 { height: 17px; }
.after { margin-bottom: 19px; }
.name mark { font-size: 15.400px; line-height: 19px; }
.boxed { outline: 1px solid #b5b5b5; }
.grip { position: absolute; left: 21px; top: 2px; width: 13px; height: 20px; border: 1px solid #bbb; border-right: 0; background: #fff; color: #999; font: 10px/18px "DejaVu Sans", sans-serif; text-align: center; }
.move { position: absolute; left: 22px; top: 59px; }
.handle { position: absolute; left: 592px; top: 160px; width: 6px; height: 6px; border: 1px solid #888; }
.sheet-text hr { border: 0; height: 2px; background: #7190ca; margin: 16px 0 34px; width: 557px; }
.inv { display: flex; align-items: center; height: 26px; gap: 5px; font-size: 20.200px; line-height: 25px; color: #000; }
.dates { display: flex; padding: 17px 0 0 7px; }
.dates div { width: 278.500px; flex: none; display: flex; flex-direction: column; align-items: flex-start; color: #000; }
.dates b { line-height: 16px; }
.dates mark { font-size: 12.900px; }
.grid { display: grid; width: 557px; grid-template-columns: 198px 89.700px 89.700px 89.700px 89.700px; grid-auto-rows: 22.700px; margin-top: 21px; border-top: 1px solid #ddd; font-size: 11.500px; }
.c { border-right: 1px solid #ddd; border-bottom: 1px solid #ddd; padding: 1px 7px 0; display: flex; align-items: center; gap: 4px; }
.c mark { font-size: 10.300px; line-height: 12px; }
.c.hd { font-weight: 700; color: #000; }
.two { grid-column: span 2; }
.hd.two { grid-column: 2 / span 2; border-left: 1px solid #ddd; margin-left: -1px; }
.c.end { grid-column: 4 / span 2; justify-content: flex-end; }
.c.blue { border-top: 2px solid #7190ca; margin-top: -1px; }
.pay { margin-top: 35px; height: 16px; line-height: 16px; display: flex; gap: 6px; }
.pay.second { margin-top: 14px; }
.sheet-text mark.strong { font-weight: 600; color: #6b7484; }
.scroll { width: 16px; background: #e2e2e2; border-right: 1px solid #cfcfcf; display: flex; flex-direction: column; padding: 2px 0 1px 1px; }
.scroll .btn { width: 12px; height: 11px; border: 1px solid #cfcfcf; background: #f0f0f0; display: flex; align-items: center; justify-content: center; }
.win .scroll svg { stroke: none; }
.scroll .end { margin-top: auto; }
.thumb { width: 12px; height: 367px; margin-top: 1px; border: 1px solid #cfcfcf; background: #f0f0f0; display: flex; align-items: center; justify-content: center; }
.thumb u { width: 6px; height: 13px; background: repeating-linear-gradient(#ccc 0 1px, #f0f0f0 1px 2px); }
.panel { width: 208px; border-right: 1px solid #cbcbcb; padding: 0 10px 0 14px; display: flex; flex-direction: column; overflow: hidden; font-size: 11px; color: #333; }
.panel > * { flex: none; }
.lbl { height: 14px; font-size: 10.400px; line-height: 16px; }
.lbl.g7:first-child { font-size: 10.500px; line-height: 14px; }
.box { width: 184px; height: 20px; background: #fff; border: 1px solid #cfcfcf; border-radius: 1px; line-height: 17px; padding: 0 3px; font-size: 10.500px; color: #333; }
.sel { display: flex; align-items: center; line-height: 18px; font-size: 10.700px; }
.chev { margin-left: auto; }
.swatch { width: 12px; height: 12px; border: 1px solid #b8c2d4; background: #d9e2f1; margin: 0 6px 0 2px; }
.area { height: 34px; font-size: 10.700px; }
.div { height: 1px; background: #cfcfcf; width: 184px; }
.check { display: flex; align-items: center; height: 14px; width: 184px; font-size: 10.400px; line-height: 14px; }
.check > i { width: 13px; height: 13px; border: 1px solid #cfcfcf; background: #fff; margin-right: 8px; flex: none; }
.check.off { color: #aaa; }
.check.off > i { background: #f5f5f5; border-color: #ddd; }
.check.tall { height: 20px; }
.check .box { margin-left: auto; }
.indent { padding-left: 21px; }
.spin, .box.off { background: #f5f5f5; border-color: #ddd; color: #aaa; }
.win .spin svg, .win .off svg { stroke: #aaa; }
.spin { display: flex; align-items: center; justify-content: flex-end; gap: 6px; padding-right: 5px; }
.w43 { width: 43px; } .w77 { width: 78px; } .w78 { width: 78px; }
.pair { display: flex; justify-content: flex-end; gap: 8px; width: 184px; }
.pair .box { padding-right: 5px; }
.pair .w77 { padding-right: 3px; }
.color { display: flex; align-items: center; justify-content: space-between; width: 184px; height: 20px; font-size: 10.400px; line-height: 14px; }
.pick { width: 43px; padding: 0; }
.g1 { margin-top: 1px; } .g2 { margin-top: 2px; } .g7 { margin-top: 7px; } .g8 { margin-top: 8px; } .g9 { margin-top: 9px; }
.right-bar { width: 35px; padding-top: 15px; }
.right-bar span { height: 27px; margin-bottom: 9.100px; padding-left: 2px; display: flex; align-items: center; justify-content: center; }
.win .right-bar svg { stroke: #a5a5a5; }
.win .right-bar .ta { fill: #a0a0a0; font-size: 12px; }
.right-bar .sel-act { background: #7b848c; }
.status { height: 22px; flex: none; border-top: 1px solid #cbcbcb; display: flex; align-items: center; font: 700 10.300px "Liberation Sans", "Noto Sans CJK SC", sans-serif; padding: 1px 0 0 35px; color: #333; white-space: nowrap; }
.vsep { width: 1px; height: 22px; background: #cbcbcb; }
.pg { margin-right: 7px; width: 54px; }
.wc { margin: 0 6px 0 8px; }
.win .tiny { font-size: 6px; font-weight: 700; }
.st-right { margin-left: auto; display: flex; align-items: center; border-left: 1px solid #cbcbcb; height: 22px; padding: 0 39px 0 12px; }
.lang { width: 54px; }
.globe { margin: 0 10px 0 8px; }
.abc { width: 19px; height: 19px; background: #7b848c; margin-right: 9px; display: flex; justify-content: center; }
.win .abct { fill: #fff; font-size: 7px; font-weight: 700; }
.win svg.abct, .win svg .abct { fill: #fff; }
.fit { margin: 0 14px 0 11px; }
.fitw { margin-right: 15px; }
.minus { margin-right: 20px; }
.zoom { width: 70px; font-size: 10.700px; }

/* floating cards */
.card { position: absolute; left: 86px; background: #f9fafc; border-radius: 9px; box-shadow: 0 18px 32px rgba(0,0,0,.13); }
.attach { top: 582px; width: 230px; height: 100px; display: flex; align-items: center; justify-content: center; gap: 6px; padding: 0 5px 0 0; font: 700 24px/34px "Noto Sans CJK SC", sans-serif; color: #24565a; }
.attach svg { margin-top: 4px; }
.file { top: 722px; width: 460px; height: 131px; padding: 11px 9px 10px 8px; }
.file-in { height: 110px; background: #d9dadd; border-radius: 8px; display: flex; align-items: center; padding: 0 24px 0 16px; }
.pdf { margin-top: -11px; }
.fname { margin-left: 17px; display: flex; flex-direction: column; font-size: 26.600px; line-height: 36px; color: #3b4354; width: 196px; margin-top: -6px; }
.fname span { font-weight: 300; }
.fname b { font-size: 28px; }
.open { width: 57px; height: 57px; border: 4px solid #fff; border-radius: 10px; display: flex; align-items: center; justify-content: center; }
.ops { margin-left: auto; display: flex; flex-direction: column; align-items: center; gap: 24px; margin-top: -4px; }
```
